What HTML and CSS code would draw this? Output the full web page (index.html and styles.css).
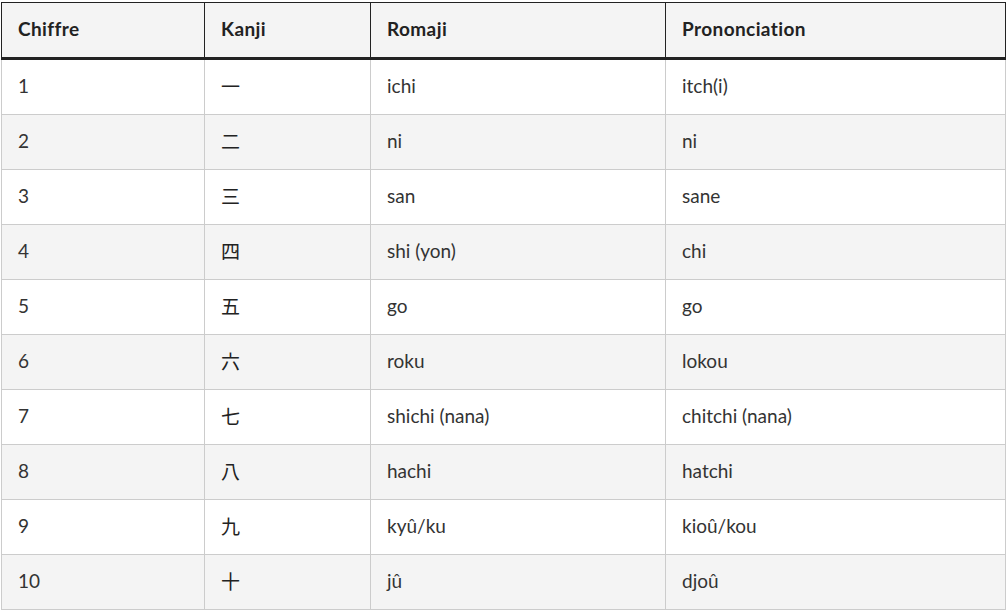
FILE: index.html
```html
<!DOCTYPE html>
<html lang="fr">
<head>
<meta charset="utf-8">
<link rel="stylesheet" href="styles.css">
</head>
<body>
<div class="wrap">
<table class="nums">
<colgroup>
<col class="c1"><col class="c2"><col class="c3"><col class="c4">
</colgroup>
<thead>
<tr><th>Chiffre</th><th>Kanji</th><th>Romaji</th><th>Prononciation</th></tr>
</thead>
<tbody>
<tr><td>1</td><td class="kj">一</td><td>ichi</td><td>itch(i)</td></tr>
<tr><td>2</td><td class="kj">二</td><td>ni</td><td>ni</td></tr>
<tr><td>3</td><td class="kj">三</td><td>san</td><td>sane</td></tr>
<tr><td>4</td><td class="kj">四</td><td>shi (yon)</td><td>chi</td></tr>
<tr><td>5</td><td class="kj">五</td><td>go</td><td>go</td></tr>
<tr><td>6</td><td class="kj">六</td><td>roku</td><td>lokou</td></tr>
<tr><td>7</td><td class="kj">七</td><td>shichi (nana)</td><td>chitchi (nana)</td></tr>
<tr><td>8</td><td class="kj">八</td><td>hachi</td><td>hatchi</td></tr>
<tr><td>9</td><td class="kj">九</td><td>kyû/ku</td><td>kioû/kou</td></tr>
<tr><td>10</td><td class="kj">十</td><td>jû</td><td>djoû</td></tr>
</tbody>
</table>
</div>
</body>
</html>
```
FILE: styles.css
```css
html, body {
  margin: 0;
  padding: 0;
  background: #fff;
}
.wrap {
  padding: 2px 0 0 1px;
}
.nums {
  border-collapse: collapse;
  table-layout: fixed;
  width: 1004px;
  font-family: "Lato", "Noto Sans CJK JP", sans-serif;
  font-size: 19px;
  color: #333;
}
.c1 { width: 203px; }
.c2 { width: 166px; }
.c3 { width: 295px; }
.c4 { width: 340px; }
.nums th {
  background: #f4f4f4;
  border: 1px solid #222;
  border-bottom: 3px solid #222;
  height: 50px;
  padding: 0 16px 4px;
  text-align: left;
  font-weight: 700;
  letter-spacing: 0.4px;
  color: #222;
}
.nums td {
  border: 1px solid #ccc;
  height: 50px;
  padding: 0 16px 4px;
  text-align: left;
  vertical-align: middle;
}
.nums tbody tr:nth-child(even) td {
  background: #f4f4f4;
}
.nums td.kj {
  font-family: "Noto Sans CJK JP", sans-serif;
  font-weight: 400;
  font-size: 19px;
  color: #222;
}
```
